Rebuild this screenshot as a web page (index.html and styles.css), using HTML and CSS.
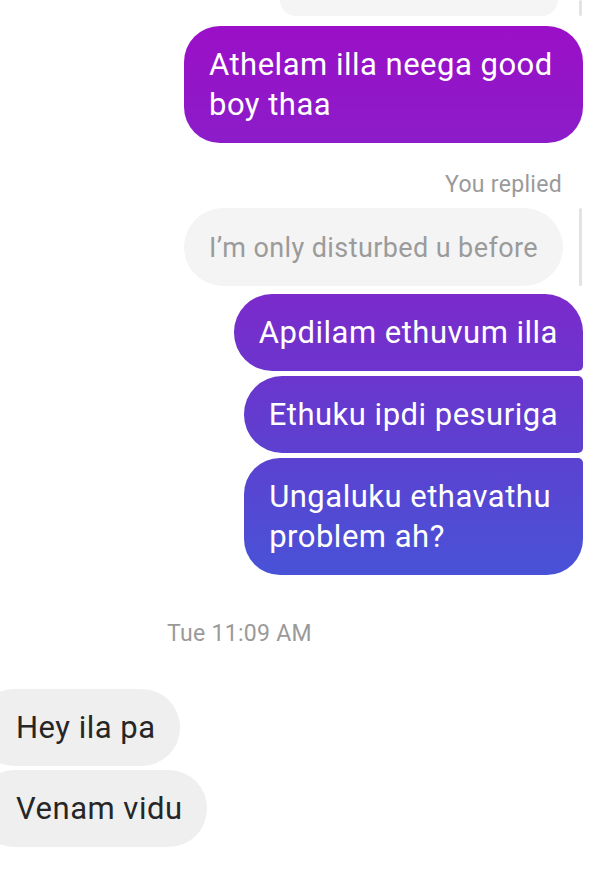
FILE: index.html
```html
<!DOCTYPE html>
<html>
<head>
<meta charset="utf-8">
<link rel="stylesheet" href="styles.css">
</head>
<body>
<div class="chat">
  <div class="reply-row top-cut">
    <div class="reply-bubble cut"></div>
    <div class="reply-bar"></div>
  </div>

  <div class="row out">
    <div class="bubble sent single-group">Athelam illa neega good<br>boy thaa</div>
  </div>

  <div class="meta right">You replied</div>
  <div class="reply-row">
    <div class="reply-bubble">I’m only disturbed u before</div>
    <div class="reply-bar"></div>
  </div>

  <div class="group out-group">
    <div class="row out"><div class="bubble sent g-first">Apdilam ethuvum illa</div></div>
    <div class="row out"><div class="bubble sent g-mid">Ethuku ipdi pesuriga</div></div>
    <div class="row out"><div class="bubble sent g-last">Ungaluku ethavathu<br>problem ah?</div></div>
  </div>

  <div class="meta stamp">Tue 11:09 AM</div>

  <div class="group in-group">
    <div class="row in"><div class="bubble recv">Hey ila pa</div></div>
    <div class="row in"><div class="bubble recv">Venam vidu</div></div>
  </div>
</div>
</body>
</html>
```

FILE: styles.css
```css
html, body {
  margin: 0;
  padding: 0;
  background: #ffffff;
}
body {
  width: 598px;
  height: 890px;
  overflow: hidden;
  font-family: Roboto, "Noto Sans", sans-serif;
}
.chat {
  display: flex;
  flex-direction: column;
}
.row {
  display: flex;
}
.row.out {
  justify-content: flex-end;
  padding-right: 15px;
}
.row.in {
  justify-content: flex-start;
}
.bubble {
  font-size: 31px;
  letter-spacing: 0.5px;
  line-height: 40px;
  padding: 19px 25px 18px 25px;
  border-radius: 38px;
  white-space: nowrap;
}
.sent {
  color: #ffffff;
  background: linear-gradient(to bottom, #9e0cc7 0px, #8c1cc9 140px, #7a2bcb 300px, #623ccf 420px, #4853d7 576px, #4455d8 890px);
  background-attachment: fixed;
}
.single-group {
  margin-top: 10px;
  width: 349px;
  border-radius: 36px;
}
.g-first { border-radius: 38px 38px 5px 38px; }
.g-mid { border-radius: 38px 5px 5px 38px; }
.g-last {
  border-radius: 36px 5px 36px 36px;
  padding-right: 32px;
}
.group {
  display: flex;
  flex-direction: column;
  gap: 5px;
}
.out-group { margin-top: 8px; }
.in-group { margin-top: 43px; gap: 4px; }
.recv {
  background: #efefef;
  color: #262626;
  margin-left: -24px;
  padding-left: 40px;
  padding-right: 24px;
}
.meta {
  font-size: 23px;
  letter-spacing: 0.3px;
  line-height: 24px;
  color: #9a9a9a;
}
.meta.right {
  text-align: right;
  padding-right: 36px;
  margin-top: 30px;
  margin-bottom: -1px;
}
.meta.stamp {
  padding-left: 167px;
  margin-top: 47px;
}
.reply-row {
  display: flex;
  justify-content: flex-end;
  align-items: stretch;
  gap: 16px;
  padding-right: 16px;
  margin-top: 12px;
}
.reply-bubble {
  background: #f4f4f4;
  color: #9b9b9b;
  font-size: 27px;
  letter-spacing: 0.4px;
  line-height: 40px;
  padding: 20px 25px 18px 25px;
  border-radius: 39px;
  white-space: nowrap;
}
.reply-bar {
  width: 3px;
  background: #e3e3e3;
  border-radius: 2px;
}
.top-cut {
  margin-top: 0;
  height: 16px;
}
.reply-bubble.cut {
  width: 278px;
  padding: 0;
  margin-right: 5px;
  border-radius: 0 0 30px 30px;
  background: #f5f5f5;
}
```
